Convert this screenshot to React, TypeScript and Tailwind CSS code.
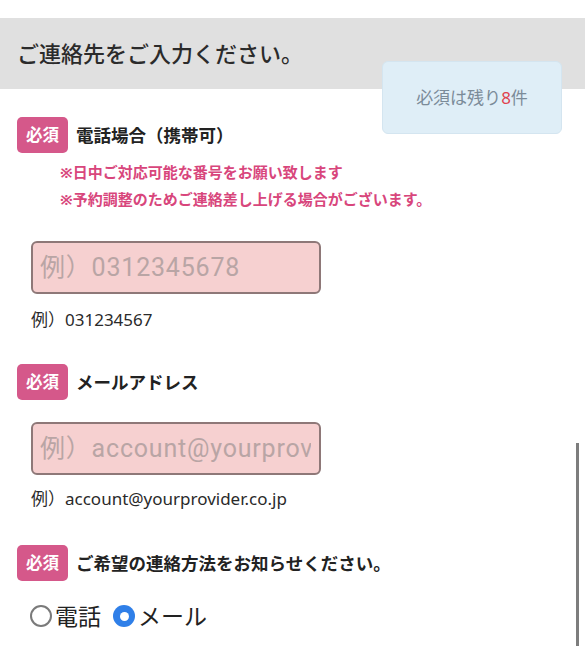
import React from 'react';

const FONT = "font-['Noto_Sans','Noto_Sans_CJK_JP',sans-serif]";

const Required: React.FC = () => (
  <span className="flex h-[36px] w-[51px] shrink-0 items-center justify-center rounded-[5px] bg-[#d5588a] text-[16.5px] font-bold text-white">
    必須
  </span>
);

const FieldLabel: React.FC<{ children: React.ReactNode }> = ({ children }) => (
  <div className="flex items-center gap-[8px]">
    <Required />
    <span className="text-[17.5px] font-bold text-[#222]">{children}</span>
  </div>
);

const TextBox: React.FC<{ placeholder: string; type?: string }> = ({ placeholder, type = 'text' }) => (
  <input
    readOnly
    type={type}
    placeholder={placeholder}
    className="ml-[14px] block h-[53px] w-[290px] rounded-[6px] border-2 border-[#8e7878] bg-[#f6d0d0] pl-[7px] pr-[8px] font-['Roboto','Noto_Sans_CJK_JP',sans-serif] text-[25px] tracking-[0.8px] outline-none placeholder:text-[#b9a5a5]"
  />
);

const Hint: React.FC<{ children: React.ReactNode }> = ({ children }) => (
  <p className="ml-[14px] text-[17px] leading-[24px] text-[#2a2a2a]">{children}</p>
);

const App: React.FC = () => {
  return (
    <div className={`relative h-[646px] w-[585px] overflow-hidden bg-white ${FONT}`}>
      {/* 見出し */}
      <div className="mt-[18px] flex h-[71px] items-center bg-[#e0e0e0] px-[17px]">
        <h2 className="text-[22px] font-medium text-[#2b2b2b]">ご連絡先をご入力ください。</h2>
      </div>

      <div className="px-[17px]">
        {/* 電話番号 */}
        <section className="pt-[28px]">
          <FieldLabel>電話場合（携帯可）</FieldLabel>
          <div className="mt-[6px] pl-[43px] text-[15px] font-bold leading-[27px] text-[#d8467c]">
            <p>※日中ご対応可能な番号をお願い致します</p>
            <p>※予約調整のためご連絡差し上げる場合がございます。</p>
          </div>
          <div className="mt-[28px]">
            <TextBox type="tel" placeholder="例）0312345678" />
          </div>
          <div className="mt-[14px]">
            <Hint>例）031234567</Hint>
          </div>
        </section>

        {/* メール */}
        <section className="pt-[32px]">
          <FieldLabel>メールアドレス</FieldLabel>
          <div className="mt-[22px]">
            <TextBox type="email" placeholder="例）account@yourprovider.co.jp" />
          </div>
          <div className="mt-[12px]">
            <Hint>例）account@yourprovider.co.jp</Hint>
          </div>
        </section>

        {/* 連絡方法 */}
        <section className="pt-[34px]">
          <FieldLabel>ご希望の連絡方法をお知らせください。</FieldLabel>
          <div className="mt-[20px] ml-[13px] flex items-center text-[23px] leading-[30px] text-[#222]">
            <label className="flex items-center">
              <span className="h-[22px] w-[22px] rounded-full border-2 border-[#7a7a7a] bg-white" />
              <span className="ml-[3px]">電話</span>
            </label>
            <label className="ml-[12px] flex items-center">
              <span className="flex h-[22px] w-[22px] items-center justify-center rounded-full bg-[#2f7fe8]">
                <span className="h-[9px] w-[9px] rounded-full bg-white" />
              </span>
              <span className="ml-[3px]">メール</span>
            </label>
          </div>
        </section>
      </div>

      {/* 残り件数 */}
      <div className="absolute left-[382px] top-[61px] flex h-[73px] w-[180px] items-center justify-center rounded-[6px] border border-[#d4e5f0] bg-[#dfeef7] text-[17px] text-[#7b8b99]">
        必須は残り<span className="text-[#e0424e]">8</span>件
      </div>

      {/* スクロールバー */}
      <div className="absolute right-[6px] top-[443px] bottom-0 w-[3px] bg-[#7d7d7d]" />
    </div>
  );
};

export default App;
